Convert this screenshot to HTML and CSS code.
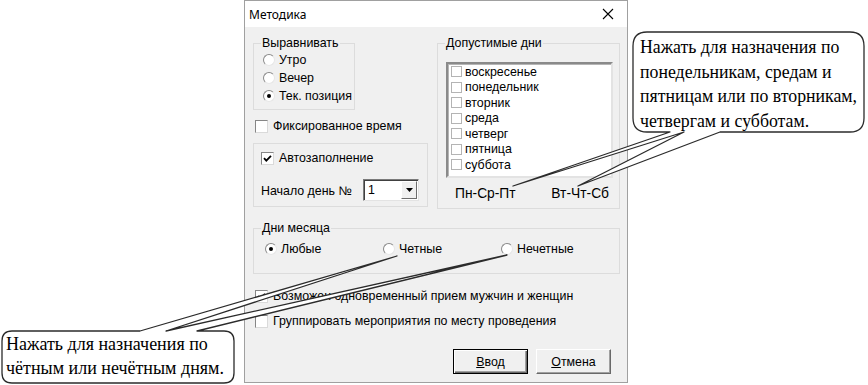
FILE: index.html
```html
<!DOCTYPE html>
<html lang="ru">
<head>
    <meta charset="UTF-8">
    <title>Методика</title>
    <link rel="stylesheet" href="styles.css">
</head>
<body>
<div class="page">
    <div class="dialog">
        <div class="titlebar">
            <span class="title">Методика</span>
            <svg class="close" width="12" height="12" viewBox="0 0 12 12">
                <path d="M1 1L11 11M11 1L1 11" stroke="#000" stroke-width="1.1" fill="none"/>
            </svg>
        </div>

        <div class="dlg-body">
            <div class="top-row">
                <div class="left-col">
                    <div class="group align-group">
                        <span class="legend">Выравнивать</span>
                        <div class="opt"><span class="radio"></span>Утро</div>
                        <div class="opt"><span class="radio"></span>Вечер</div>
                        <div class="opt"><span class="radio on"></span>Тек. позиция</div>
                    </div>

                    <div class="opt fixed"><span class="check"></span>Фиксированное время</div>

                    <div class="group auto-group">
                        <div class="opt">
                            <span class="check">
                                <svg width="9" height="9" viewBox="0 0 9 9"><path d="M1 4.2L3.3 6.6L8 1.8" stroke="#000" stroke-width="1.8" fill="none"/></svg>
                            </span>Автозаполнение
                        </div>
                        <div class="start-row">
                            <span>Начало день №</span>
                            <div class="combo">
                                <span class="combo-val">1</span>
                                <span class="combo-btn">
                                    <svg width="7" height="4" viewBox="0 0 7 4"><path d="M0 0H7L3.5 4Z" fill="#000"/></svg>
                                </span>
                            </div>
                        </div>
                    </div>
                </div>

                <div class="group days-group">
                    <span class="legend">Допустимые дни</span>
                    <ul class="listbox">
                        <li><span class="box"></span>воскресенье</li>
                        <li><span class="box"></span>понедельник</li>
                        <li><span class="box"></span>вторник</li>
                        <li><span class="box"></span>среда</li>
                        <li><span class="box"></span>четверг</li>
                        <li><span class="box"></span>пятница</li>
                        <li><span class="box"></span>суббота</li>
                    </ul>
                    <div class="quick">
                        <span>Пн-Ср-Пт</span>
                        <span>Вт-Чт-Сб</span>
                    </div>
                </div>
            </div>

            <div class="group month-group">
                <span class="legend">Дни месяца</span>
                <div class="opt"><span class="radio on"></span>Любые</div>
                <div class="opt"><span class="radio"></span>Четные</div>
                <div class="opt"><span class="radio"></span>Нечетные</div>
            </div>

            <div class="opt flag first">
                <span class="check">
                    <svg width="9" height="9" viewBox="0 0 9 9"><path d="M1 4.2L3.3 6.6L8 1.8" stroke="#000" stroke-width="1.8" fill="none"/></svg>
                </span>Возможен одновременный прием мужчин и женщин
            </div>
            <div class="opt flag"><span class="check"></span>Группировать мероприятия по месту проведения</div>

            <div class="buttons">
                <button class="btn default"><u>В</u>вод</button>
                <button class="btn"><u>О</u>тмена</button>
            </div>
        </div>
    </div>

    <!-- callouts drawn over the dialog -->
    <svg class="callouts" width="868" height="385" viewBox="0 0 868 385">
        <path d="M647 32H850Q864 32 864 46V118Q864 132 850 132H720L578 186L684 132L513 186L670 132H647Q633 132 633 118V46Q633 32 647 32Z"
              fill="#fff" stroke="#2b2b2b" stroke-width="1.3" stroke-linejoin="round"/>
        <path d="M12 331H140L397 256L166 331L507 255L197 331H224Q234 331 234 341V373Q234 383 224 383H12Q2 383 2 373V341Q2 331 12 331Z"
              fill="#fff" stroke="#2b2b2b" stroke-width="1.3" stroke-linejoin="round"/>
    </svg>
    <div class="note note-right">Нажать для назначения по<br>понедельникам, средам и<br>пятницам или по вторникам,<br>четвергам и субботам.</div>
    <div class="note note-left">Нажать для назначения по<br>чётным или нечётным дням.</div>
</div>
</body>
</html>
```

FILE: styles.css
```css
* {
    box-sizing: border-box;
}

body {
    margin: 0;
    background: #fff;
    font-family: "Liberation Sans", Arial, sans-serif;
    font-size: 12.4px;
    color: #000;
}

.page {
    position: relative;
    width: 868px;
    height: 385px;
    overflow: hidden;
}

.dialog {
    margin-left: 244px;
    width: 384px;
    height: 383px;
    border: 1px solid #a0a0a0;
    background: #f0f0f0;
    display: flex;
    flex-direction: column;
}

.titlebar {
    height: 26px;
    flex-shrink: 0;
    background: #fff;
    display: flex;
    align-items: center;
    justify-content: space-between;
    padding: 0 13px 0 4px;
}

.title {
    font-family: "Noto Sans", sans-serif;
    font-size: 12px;
}

.dlg-body {
    padding: 16px 7px 0 8px;
}

.top-row {
    display: flex;
    gap: 9px;
}

.left-col {
    width: 175px;
    display: flex;
    flex-direction: column;
}

.group {
    position: relative;
    border: 1px solid #dcdcdc;
}

.legend {
    position: absolute;
    top: -8px;
    left: 7px;
    padding: 0 1px;
    line-height: 15px;
    background: #f0f0f0;
}

.opt {
    display: flex;
    align-items: center;
    height: 18px;
    white-space: nowrap;
}

.radio {
    width: 12px;
    height: 12px;
    flex-shrink: 0;
    margin-right: 4px;
    border-radius: 50%;
    background: #fff;
    border: 1px solid;
    border-color: #8a8a8a #e6e6e6 #e6e6e6 #8a8a8a;
    display: flex;
    align-items: center;
    justify-content: center;
}

.radio.on::after {
    content: "";
    width: 4px;
    height: 4px;
    border-radius: 50%;
    background: #000;
}

.check {
    width: 13px;
    height: 13px;
    flex-shrink: 0;
    margin-right: 5px;
    background: #fff;
    border: 1px solid;
    border-color: #868686 #dadada #dadada #868686;
    display: flex;
    align-items: center;
    justify-content: center;
}

/* Выравнивать */
.align-group {
    width: 102px;
    height: 67px;
    padding: 7px 0 0 9px;
}

.fixed {
    margin: 7px 0 0 2px;
}

.auto-group {
    margin-top: 8px;
    height: 64px;
    padding: 5px 8px 0 7px;
}

.start-row {
    display: flex;
    align-items: center;
    justify-content: space-between;
    height: 22px;
    margin-top: 11px;
    padding-top: 2px;
}

.start-row > span {
    padding-top: 2px;
}

.combo {
    width: 56px;
    height: 22px;
    background: #fff;
    border: 1px solid;
    border-color: #7a7a7a #e3e3e3 #e3e3e3 #7a7a7a;
    box-shadow: inset 1px 1px #404040;
    display: flex;
    align-items: center;
    justify-content: space-between;
    padding: 1px 1px 1px 4px;
}

.combo-btn {
    width: 16px;
    height: 18px;
    background: #f0f0f0;
    border: 1px solid;
    border-color: #fff #6d6d6d #6d6d6d #fff;
    display: flex;
    align-items: center;
    justify-content: center;
}

/* Допустимые дни */
.days-group {
    width: 183px;
    height: 166px;
    padding: 18px 0 0 8px;
}

.listbox {
    list-style: none;
    margin: 0;
    width: 167px;
    height: 116px;
    padding: 0 0 0 3px;
    background: #fff;
    border: 2px solid;
    border-color: #8a8a8a #e3e3e3 #e3e3e3 #8a8a8a;
    box-shadow: inset 1px 1px #b5b5b5;
}

.listbox li {
    display: flex;
    align-items: center;
    height: 15.5px;
}

.box {
    width: 11px;
    height: 11px;
    margin-right: 3px;
    background: #fff;
    border: 1px solid #b4b4b4;
}

.quick {
    display: flex;
    justify-content: space-between;
    width: 168px;
    height: 18px;
    margin-top: 6px;
    padding: 0 5px 0 9px;
    align-items: center;
    font-size: 13.8px;
}

/* Дни месяца */
.month-group {
    display: flex;
    margin-top: 19px;
    height: 46px;
    padding: 11px 0 0 11px;
}

.month-group .opt {
    width: 118px;
}

.flag {
    margin-left: 2px;
    margin-top: 7px;
}

.flag.first {
    margin-top: 13px;
}

.buttons {
    display: flex;
    justify-content: flex-end;
    gap: 8px;
    margin-top: 19px;
    padding-right: 9px;
}

.btn {
    width: 75px;
    height: 25px;
    padding: 0;
    font: inherit;
    color: #000;
    background: #f0f0f0;
    border: 1px solid;
    border-color: #fff #696969 #696969 #fff;
    box-shadow: inset -1px -1px #a0a0a0;
}

.btn.default {
    border-color: #000;
    box-shadow: inset 1px 1px #fff, inset -1px -1px #696969, inset -2px -2px #a0a0a0;
}

/* callouts */
.callouts {
    position: absolute;
    left: 0;
    top: 0;
    pointer-events: none;
}

.note {
    position: absolute;
    font-family: "Liberation Serif", "Times New Roman", Tinos, "Noto Serif", "DejaVu Serif", serif;
    font-size: 18px;
    line-height: 24.5px;
    white-space: nowrap;
}

.note-right {
    left: 640px;
    top: 35px;
    font-size: 17.8px;
}

.note-left {
    left: 6px;
    top: 332px;
    line-height: 24px;
}
```
